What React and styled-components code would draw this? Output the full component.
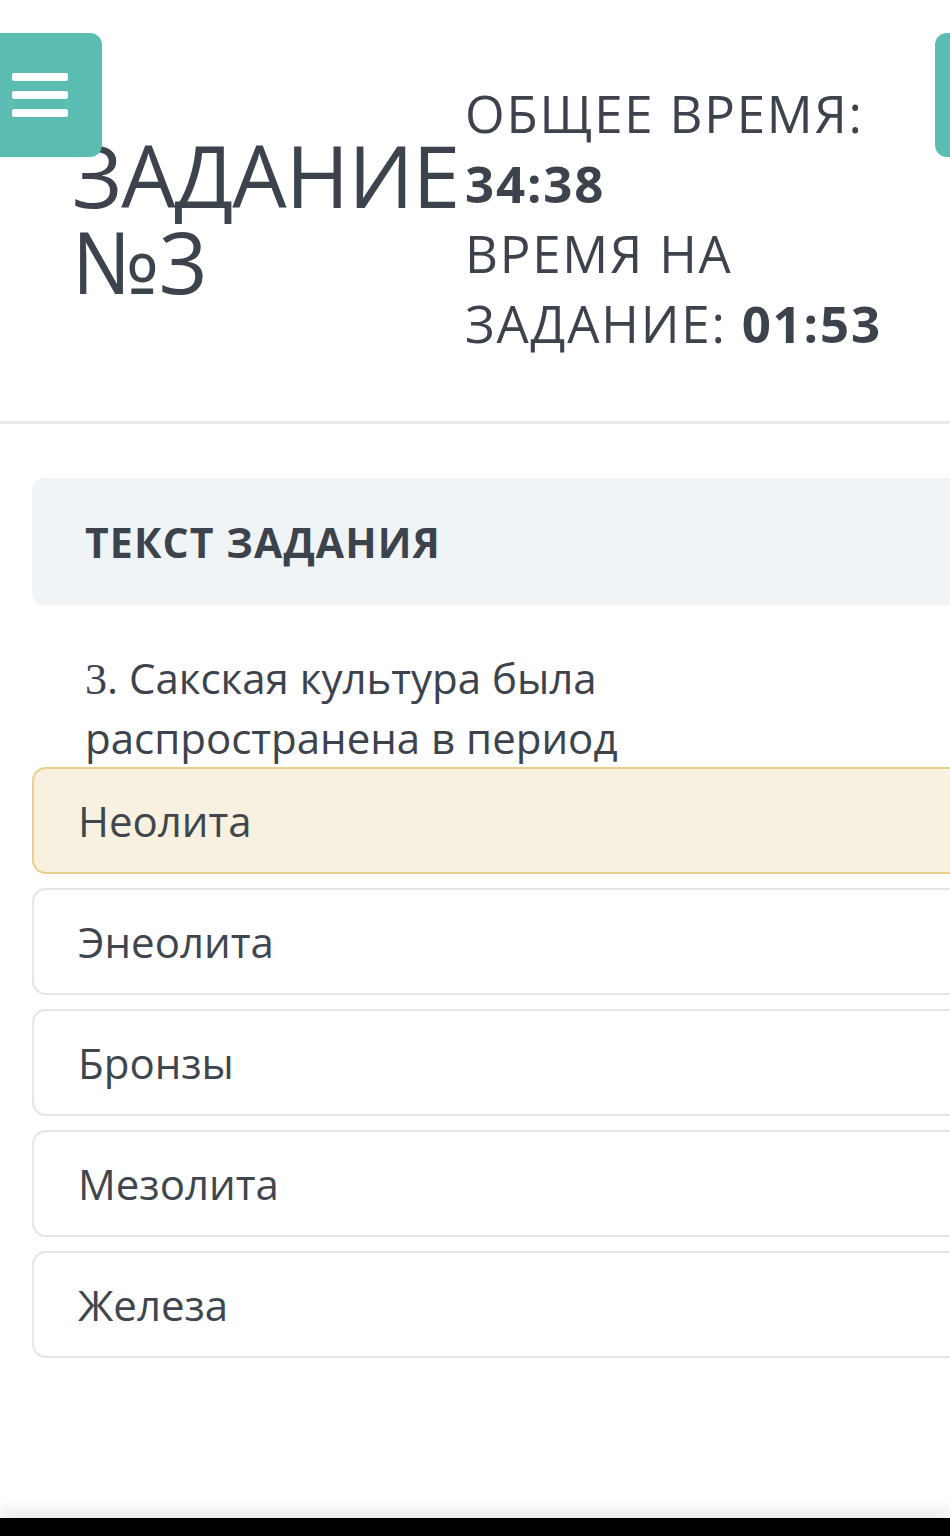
import React from "react";
import styled, { createGlobalStyle } from "styled-components";

const TEAL = "#5bbcb2";
const INK = "#3c434c";

const GlobalStyle = createGlobalStyle`
  html, body {
    margin: 0;
    padding: 0;
    background: #ffffff;
    overflow: hidden;
  }
  body {
    font-family: "Open Sans", "Noto Sans", sans-serif;
    color: ${INK};
  }
`;

const Page = styled.div`
  position: relative;
  height: 1536px;
  display: flex;
  flex-direction: column;
  overflow: hidden;
`;

const FloatButton = styled.button`
  position: absolute;
  top: 33px;
  ${({ side }) => (side === "right" ? "left: 935px;" : "left: 0;")}
  width: 102px;
  height: 124px;
  border: none;
  border-radius: ${({ side }) => (side === "right" ? "12px 0 0 12px" : "0 12px 12px 0")};
  background: ${TEAL};
  padding: 0 0 0 12px;
  display: flex;
  flex-direction: column;
  justify-content: center;
  gap: 10px;
`;

const Bar = styled.span`
  display: block;
  width: 56px;
  height: 8px;
  border-radius: 2px;
  background: #ffffff;
`;

const Header = styled.header`
  display: flex;
  align-items: flex-start;
  padding: 78px 0 63px 72px;
  border-bottom: 3px solid #e7e9ea;
`;

const Title = styled.h1`
  margin: 54px 0 0;
  width: 393px;
  font-size: 86px;
  line-height: 86px;
  font-weight: 400;
  letter-spacing: -1px;
  white-space: nowrap;
`;

const Timer = styled.div`
  font-size: 51px;
  line-height: 70px;
  white-space: nowrap;
  letter-spacing: 1.8px;

  b {
    font-weight: 700;
  }
`;

const Content = styled.main`
  padding: 54px 0 0 32px;
  margin-right: -30px;
`;

const SectionHead = styled.div`
  height: 127px;
  display: flex;
  align-items: center;
  padding-left: 53px;
  border-radius: 12px;
  background: #f0f4f6;
  font-size: 41px;
  font-weight: 700;
  letter-spacing: 1.1px;
`;

const Question = styled.p`
  margin: 44px 0 0 53px;
  width: 620px;
  font-size: 42px;
  line-height: 58px;
`;

const Num = styled.span`
  font-family: "Liberation Serif", "DejaVu Serif", serif;
  font-size: 44px;
`;

const Options = styled.div`
  display: flex;
  flex-direction: column;
  gap: 14px;
`;

const Option = styled.div`
  height: 107px;
  box-sizing: border-box;
  display: flex;
  align-items: center;
  padding-left: 44px;
  border-radius: 14px;
  border: 2px solid ${({ selected }) => (selected ? "#ebcf8d" : "#e2e6e8")};
  background: ${({ selected }) => (selected ? "#f8f1df" : "#ffffff")};
  font-size: 42px;
  color: #40464e;
`;

const BottomBar = styled.div`
  margin-top: auto;
  height: 18px;
  background: #000000;
  box-shadow: 0 -10px 14px rgba(0, 0, 0, 0.08);
`;

const options = ["Неолита", "Энеолита", "Бронзы", "Мезолита", "Железа"];

export default function App() {
  return (
    <Page>
      <GlobalStyle />
      <Header>
        <Title>
          ЗАДАНИЕ
          <br />
          №3
        </Title>
        <Timer>
          ОБЩЕЕ ВРЕМЯ:
          <br />
          <b>34:38</b>
          <br />
          ВРЕМЯ НА
          <br />
          ЗАДАНИЕ: <b>01:53</b>
        </Timer>
      </Header>
      <Content>
        <SectionHead>ТЕКСТ ЗАДАНИЯ</SectionHead>
        <Question>
          <Num>3</Num>. Сакская культура была распространена в период
        </Question>
        <Options>
          {options.map((o, i) => (
            <Option key={o} selected={i === 0}>
              {o}
            </Option>
          ))}
        </Options>
      </Content>
      <BottomBar />
      <FloatButton side="left" aria-label="menu">
        <Bar />
        <Bar />
        <Bar />
      </FloatButton>
      <FloatButton side="right" aria-label="panel" />
    </Page>
  );
}
